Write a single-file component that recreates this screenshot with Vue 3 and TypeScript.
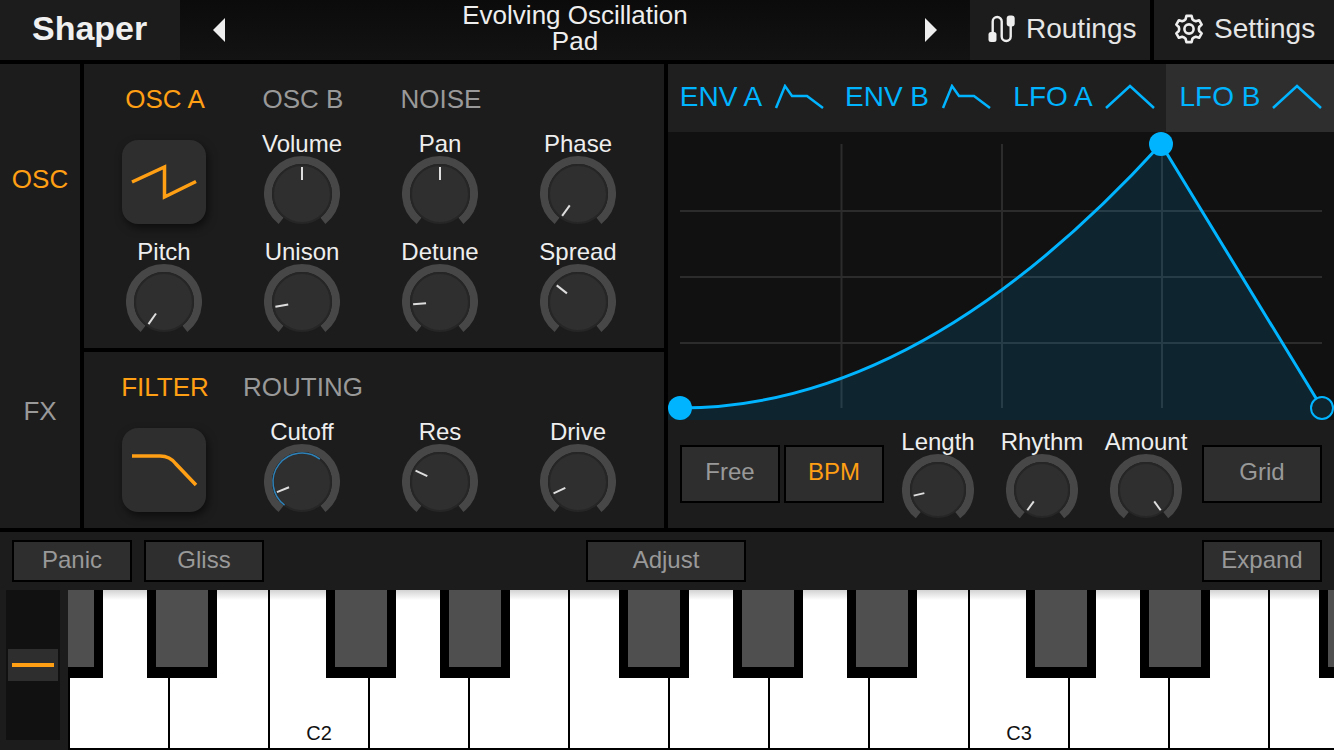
<script setup lang="ts">
import { h } from 'vue'

interface KnobItem {
  name: string
  angle: number
  arc?: number
}

// angle is clockwise from straight up, in degrees
const polar = (c: number, r: number, deg: number) => {
  const a = (deg * Math.PI) / 180
  return { x: c + r * Math.sin(a), y: c - r * Math.cos(a) }
}

const arcPath = (c: number, r: number, from: number, to: number) => {
  const p1 = polar(c, r, from)
  const p2 = polar(c, r, to)
  const large = to - from > 180 ? 1 : 0
  return `M${p1.x} ${p1.y}A${r} ${r} 0 ${large} 1 ${p2.x} ${p2.y}`
}

const KnobDial = (props: { angle: number; size?: number; arc?: number }) => {
  const size = props.size ?? 76
  const c = size / 2
  const bodyR = c - 9
  const inner = polar(c, 14, props.angle)
  const outer = polar(c, bodyR - 2, props.angle)
  return h('svg', { width: size, height: size, viewBox: `0 0 ${size} ${size}`, style: 'display:block' }, [
    h('path', { d: arcPath(c, c - 4, -142, 142), fill: 'none', stroke: '#474747', 'stroke-width': 8 }),
    h('circle', { cx: c, cy: c, r: bodyR, fill: '#2f2f2f', stroke: '#262626', 'stroke-width': 2 }),
    props.arc !== undefined
      ? h('path', { d: arcPath(c, bodyR, -143, props.arc), fill: 'none', stroke: '#2f82b8', 'stroke-width': 1.5 })
      : null,
    h('line', { x1: inner.x, y1: inner.y, x2: outer.x, y2: outer.y, stroke: '#dedede', 'stroke-width': 2 }),
  ])
}

const oscTopKnobs: KnobItem[] = [
  { name: 'Volume', angle: 0 },
  { name: 'Pan', angle: 0 },
  { name: 'Phase', angle: -144 },
]
const oscBottomKnobs: KnobItem[] = [
  { name: 'Pitch', angle: -145 },
  { name: 'Unison', angle: -100 },
  { name: 'Detune', angle: -95 },
  { name: 'Spread', angle: -52 },
]
const filterKnobs: KnobItem[] = [
  { name: 'Cutoff', angle: -112, arc: 38 },
  { name: 'Res', angle: -65 },
  { name: 'Drive', angle: -115 },
]
const lfoKnobs: KnobItem[] = [
  { name: 'Length', angle: -103 },
  { name: 'Rhythm', angle: -144 },
  { name: 'Amount', angle: 144 },
]

const envTabs = [
  { name: 'ENV A', icon: 'M2 24 L11 2 L18 12 L33 12 L49 24', active: false },
  { name: 'ENV B', icon: 'M2 24 L11 2 L18 12 L33 12 L49 24', active: false },
  { name: 'LFO A', icon: 'M1 24 L25 2 L49 24', active: false },
  { name: 'LFO B', icon: 'M1 24 L25 2 L49 24', active: true },
]

// six toothed gear outline
const gearPath = (() => {
  const pts: string[] = []
  const teeth = 6
  for (let i = 0; i < teeth; i++) {
    const base = (i * 360) / teeth
    const corners = [
      [9.8, base - 30],
      [10.4, base - 19],
      [13.4, base - 11],
      [13.4, base + 11],
      [10.4, base + 19],
    ]
    corners.forEach(([r, deg]) => {
      const p = polar(15, r, deg)
      pts.push(`${p.x.toFixed(2)} ${p.y.toFixed(2)}`)
    })
  }
  return `M${pts.join('L')}Z`
})()

const whiteKeys = Array.from({ length: 13 }, (_, i) => {
  if (i === 2) return 'C2'
  if (i === 9) return 'C3'
  return ''
})
const blackKeys = [-35, 79, 258, 372, 551, 665, 779, 958, 1072, 1251]
</script>

<template>
  <div class="synth">
    <header class="topbar">
      <div class="brand">Shaper</div>
      <div class="preset">
        <span class="arrow left"></span>
        <div class="preset-name">Evolving Oscillation<br />Pad</div>
        <span class="arrow right"></span>
      </div>
      <div class="top-btn routings">
        <svg width="30" height="30" viewBox="0 0 30 30">
          <path d="M6.7 18V7.5a4.5 4.5 0 0 1 9 0V22.5a4.5 4.5 0 0 0 9 0V12" fill="none" stroke="#eee" stroke-width="2.4" />
          <rect x="2.5" y="18" width="8" height="10" rx="2.5" fill="#eee" />
          <rect x="20.7" y="1.5" width="8" height="11" rx="3" fill="#eee" />
        </svg>
        <span>Routings</span>
      </div>
      <div class="top-btn settings">
        <svg width="30" height="30" viewBox="0 0 30 30">
          <path :d="gearPath" fill="none" stroke="#eee" stroke-width="2.6" stroke-linejoin="round" />
          <circle cx="15" cy="15" r="4.6" fill="none" stroke="#eee" stroke-width="2.6" />
        </svg>
        <span>Settings</span>
      </div>
    </header>

    <main class="middle">
      <nav class="side">
        <div class="side-item on">OSC</div>
        <div class="side-item">FX</div>
      </nav>

      <div class="center">
        <section class="panel osc">
          <div class="tabs">
            <span class="tab on">OSC A</span>
            <span class="tab">OSC B</span>
            <span class="tab">NOISE</span>
          </div>
          <div class="knob-grid">
            <button class="shape">
              <svg width="84" height="84" viewBox="0 0 84 84">
                <path d="M10 42L42.5 27V57L74 41.5" fill="none" stroke="#ff9f14" stroke-width="3.5" />
              </svg>
            </button>
            <div v-for="k in oscTopKnobs" :key="k.name" class="knob">
              <span>{{ k.name }}</span>
              <KnobDial :angle="k.angle" />
            </div>
            <div v-for="k in oscBottomKnobs" :key="k.name" class="knob">
              <span>{{ k.name }}</span>
              <KnobDial :angle="k.angle" />
            </div>
          </div>
        </section>

        <section class="panel filter">
          <div class="tabs">
            <span class="tab on">FILTER</span>
            <span class="tab">ROUTING</span>
          </div>
          <div class="knob-grid">
            <button class="shape">
              <svg width="84" height="84" viewBox="0 0 84 84">
                <path d="M10 28H38Q48 28 54 36L74 57" fill="none" stroke="#ff9f14" stroke-width="3.5" />
              </svg>
            </button>
            <div v-for="k in filterKnobs" :key="k.name" class="knob">
              <span>{{ k.name }}</span>
              <KnobDial :angle="k.angle" :arc="k.arc" />
            </div>
          </div>
        </section>
      </div>

      <section class="mod">
        <div class="mod-tabs">
          <div v-for="t in envTabs" :key="t.name" class="mod-tab" :class="{ active: t.active }">
            <span>{{ t.name }}</span>
            <svg width="50" height="26" viewBox="0 0 50 26">
              <path :d="t.icon" fill="none" stroke="#00b4ff" stroke-width="2.5" />
            </svg>
          </div>
        </div>

        <svg class="graph" width="666" height="288" viewBox="0 0 666 288">
          <g stroke="#2c2c2c" stroke-width="2">
            <path d="M173.5 12V276M334 12V276M494 12V276" />
            <path d="M12 79H654M12 145H654M12 211H654" />
          </g>
          <path d="M0 288V276H12Q252.5 276 493 12L654 276V288Z" fill="#00b4ff" fill-opacity="0.13" />
          <path d="M12 276Q252.5 276 493 12L654 276" fill="none" stroke="#00b4ff" stroke-width="3" />
          <circle cx="12" cy="276" r="12" fill="#00b4ff" />
          <circle cx="493" cy="12" r="12" fill="#00b4ff" />
          <circle cx="654" cy="276" r="11" fill="#10242e" stroke="#00b4ff" stroke-width="2" />
        </svg>

        <div class="mod-controls">
          <button class="btn mode">Free</button>
          <button class="btn mode on">BPM</button>
          <div class="mod-knobs">
            <div v-for="k in lfoKnobs" :key="k.name" class="knob">
              <span>{{ k.name }}</span>
              <KnobDial :angle="k.angle" :size="72" />
            </div>
          </div>
          <button class="btn mode grid-btn">Grid</button>
        </div>
      </section>
    </main>

    <div class="key-tools">
      <button class="btn tool">Panic</button>
      <button class="btn tool gliss">Gliss</button>
      <button class="btn tool adjust">Adjust</button>
      <button class="btn tool expand">Expand</button>
    </div>

    <div class="keyboard">
      <div class="pitch">
        <div class="pitch-track">
          <div class="pitch-handle"><i></i></div>
        </div>
      </div>
      <div class="keys">
        <div v-for="(label, i) in whiteKeys" :key="i" class="white">{{ label }}</div>
        <div v-for="x in blackKeys" :key="x" class="black" :style="{ left: x + 'px' }"></div>
      </div>
    </div>
  </div>
</template>

<style scoped>
.synth {
  width: 1334px;
  height: 750px;
  overflow: hidden;
  background: #000;
  color: #eee;
  font-family: "Liberation Sans", Arial, sans-serif;
}

button {
  font-family: inherit;
  padding: 0;
}

/* top bar */
.topbar {
  display: flex;
  height: 60px;
  margin-bottom: 4px;
}
.brand {
  width: 180px;
  padding-left: 32px;
  box-sizing: border-box;
  background: #1c1c1c;
  color: #f0f0f0;
  font-size: 34px;
  font-weight: 700;
  line-height: 56px;
}
.preset {
  flex: 1;
  display: flex;
  align-items: center;
  justify-content: space-between;
  padding: 0 33px;
  background: linear-gradient(#0b0b0b, #131313);
}
.preset-name {
  width: 300px;
  margin-bottom: 4px;
  text-align: center;
  font-size: 26px;
  line-height: 26px;
  color: #eee;
}
.arrow {
  width: 0;
  height: 0;
  border-top: 12px solid transparent;
  border-bottom: 12px solid transparent;
}
.arrow.left {
  border-right: 12px solid #eee;
}
.arrow.right {
  border-left: 12px solid #eee;
}
.top-btn {
  width: 180px;
  box-sizing: border-box;
  display: flex;
  align-items: center;
  gap: 10px;
  padding-bottom: 2px;
  background: #1c1c1c;
  font-size: 28px;
  color: #e6e6e6;
}
.top-btn.routings {
  padding-left: 16px;
}
.top-btn.settings {
  margin-left: 4px;
  padding-left: 20px;
}

/* middle area */
.middle {
  display: grid;
  grid-template-columns: 80px 580px 666px;
  gap: 4px;
  height: 464px;
}
.side {
  display: grid;
  grid-template-rows: 230px 234px;
  background: #1c1c1c;
}
.side-item {
  display: flex;
  align-items: center;
  justify-content: center;
  font-size: 26px;
  color: #999;
}
.side-item.on {
  color: #ff9f14;
}
.center {
  display: flex;
  flex-direction: column;
  gap: 4px;
}
.panel {
  background: #1c1c1c;
  padding-left: 11px;
}
.panel.osc {
  height: 284px;
}
.panel.filter {
  height: 176px;
}
.tabs {
  display: grid;
  grid-template-columns: repeat(4, 138px);
  height: 68px;
  align-items: center;
  justify-items: center;
  padding: 2px 0 0 1px;
  box-sizing: border-box;
}
.tab {
  font-size: 26px;
  color: #999;
}
.tab.on {
  color: #ff9f14;
}
.knob-grid {
  display: grid;
  grid-template-columns: repeat(4, 138px);
  grid-auto-rows: 108px;
  justify-items: center;
}
.knob {
  display: flex;
  flex-direction: column;
  align-items: center;
}
.knob span {
  font-size: 24px;
  line-height: 24px;
  color: #eee;
}
.shape {
  width: 84px;
  height: 84px;
  margin-top: 8px;
  border: 0;
  border-radius: 16px;
  background: #2e2e2e;
  box-shadow: 2px 4px 8px rgba(0, 0, 0, 0.55);
}
.shape svg {
  display: block;
}

/* envelope / lfo side */
.mod {
  background: #1c1c1c;
}
.mod-tabs {
  display: grid;
  grid-template-columns: repeat(3, 166px) 168px;
  height: 68px;
  background: #1f1f1f;
}
.mod-tab {
  display: flex;
  align-items: center;
  justify-content: center;
  gap: 12px;
  padding: 0 0 2px 2px;
  font-size: 28px;
  color: #00b4ff;
}
.mod-tab.active {
  background: #2e2e2e;
}
.graph {
  display: block;
  background: #111;
}
.mod-controls {
  display: flex;
  height: 108px;
  padding-left: 12px;
  gap: 4px;
}
.btn {
  box-sizing: border-box;
  border: 2px solid #000;
  background: #2e2e2e;
  color: #999;
  font-size: 24px;
}
.mode {
  width: 100px;
  height: 58px;
  margin-top: 25px;
  padding-bottom: 4px;
}
.mode.on {
  color: #ff9f14;
}
.grid-btn {
  width: 120px;
}
.mod-knobs {
  display: grid;
  grid-template-columns: repeat(3, 104px);
  justify-items: center;
  margin-left: -2px;
  padding-top: 10px;
}

/* strip above the keys */
.key-tools {
  display: flex;
  height: 58px;
  margin-top: 4px;
  padding: 8px 12px;
  box-sizing: border-box;
  background: #1c1c1c;
}
.tool {
  width: 120px;
  height: 42px;
  padding-bottom: 2px;
}
.gliss {
  margin-left: 12px;
}
.adjust {
  width: 160px;
  margin-left: 322px;
}
.expand {
  margin-left: auto;
}

/* keyboard */
.keyboard {
  display: flex;
  height: 160px;
}
.pitch {
  width: 68px;
  flex: none;
  padding: 0 8px 10px 6px;
  box-sizing: border-box;
  background: #1c1c1c;
}
.pitch-track {
  position: relative;
  height: 100%;
  background: #111;
}
.pitch-handle {
  position: absolute;
  left: 2px;
  right: 2px;
  top: 59px;
  height: 32px;
  display: flex;
  align-items: center;
  justify-content: center;
  background: #2e2e2e;
}
.pitch-handle i {
  display: block;
  width: 42px;
  height: 4px;
  background: #ff9f14;
}
.keys {
  position: relative;
  flex: 1;
  display: flex;
  overflow: hidden;
  padding-left: 2px;
  background: #000;
}
.white {
  flex: none;
  width: 100px;
  box-sizing: border-box;
  display: flex;
  align-items: flex-end;
  justify-content: center;
  padding-bottom: 3px;
  border-right: 2px solid #000;
  border-bottom: 2px solid #000;
  background: linear-gradient(#d2d2d2, #fff 10px);
  color: #111;
  font-size: 20px;
  line-height: 24px;
}
.black {
  position: absolute;
  top: 0;
  width: 70px;
  height: 88px;
  box-sizing: border-box;
  border: solid #000;
  border-width: 0 9px 11px;
  background: #4f4f4f;
}
</style>

<style>
html,
body {
  margin: 0;
  background: #000;
}
</style>
